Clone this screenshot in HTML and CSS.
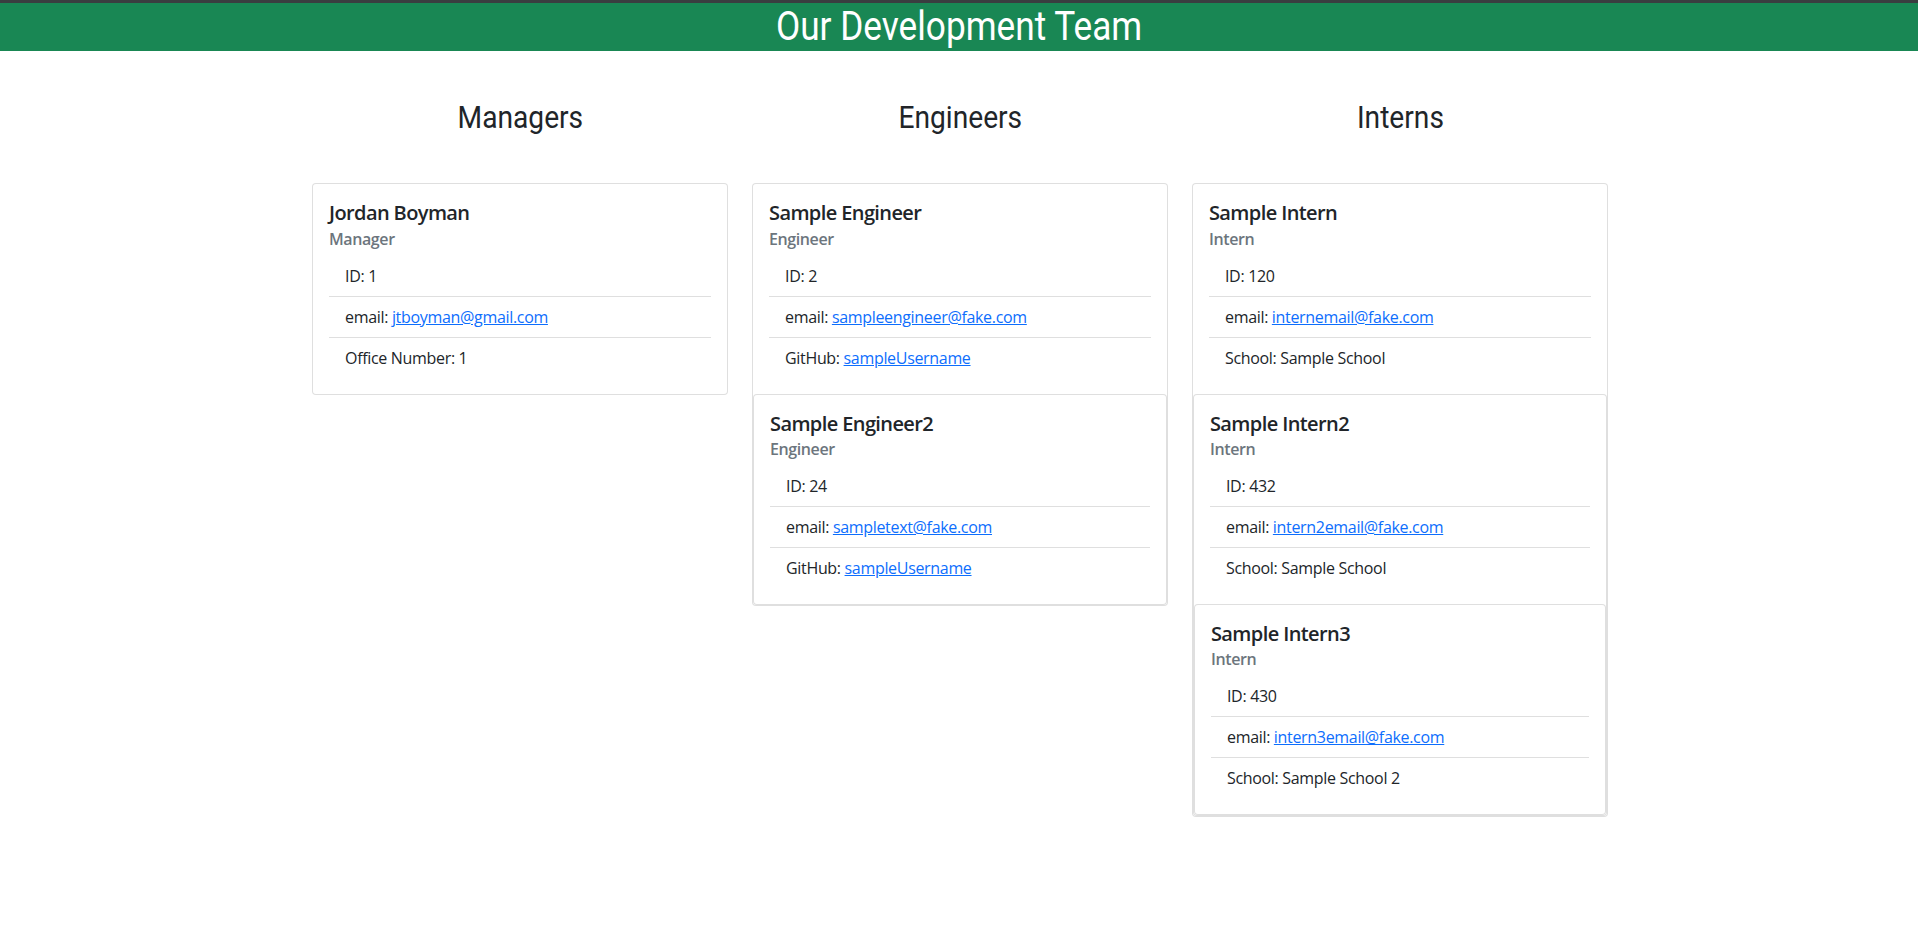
FILE: index.html
```html
<!DOCTYPE html>
<html lang="en">
<head>
<meta charset="utf-8">
<title>Our Development Team</title>
<link rel="stylesheet" href="styles.css">
</head>
<body>
<header class="site-header">
  <h1 class="site-title"><span class="condensed">Our Development Team</span></h1>
</header>
<main class="container">
  <div class="row">
    <section class="col">
      <h2 class="col-title"><span class="condensed">Managers</span></h2>
      <div class="card">
        <div class="card-body">
          <h5 class="card-title">Jordan Boyman</h5>
          <h6 class="card-subtitle">Manager</h6>
          <ul class="list-group">
            <li class="list-item">ID: 1</li>
            <li class="list-item">email: <a href="#">jtboyman@gmail.com</a></li>
            <li class="list-item">Office Number: 1</li>
          </ul>
        </div>
      </div>
    </section>
    <section class="col">
      <h2 class="col-title"><span class="condensed">Engineers</span></h2>
      <div class="card">
        <div class="card-body">
          <h5 class="card-title">Sample Engineer</h5>
          <h6 class="card-subtitle">Engineer</h6>
          <ul class="list-group">
            <li class="list-item">ID: 2</li>
            <li class="list-item">email: <a href="#">sampleengineer@fake.com</a></li>
            <li class="list-item">GitHub: <a href="#">sampleUsername</a></li>
          </ul>
        </div>
        <div class="card">
          <div class="card-body">
            <h5 class="card-title">Sample Engineer2</h5>
            <h6 class="card-subtitle">Engineer</h6>
            <ul class="list-group">
              <li class="list-item">ID: 24</li>
              <li class="list-item">email: <a href="#">sampletext@fake.com</a></li>
              <li class="list-item">GitHub: <a href="#">sampleUsername</a></li>
            </ul>
          </div>
        </div>
      </div>
    </section>
    <section class="col">
      <h2 class="col-title"><span class="condensed">Interns</span></h2>
      <div class="card">
        <div class="card-body">
          <h5 class="card-title">Sample Intern</h5>
          <h6 class="card-subtitle">Intern</h6>
          <ul class="list-group">
            <li class="list-item">ID: 120</li>
            <li class="list-item">email: <a href="#">internemail@fake.com</a></li>
            <li class="list-item">School: Sample School</li>
          </ul>
        </div>
        <div class="card">
          <div class="card-body">
            <h5 class="card-title">Sample Intern2</h5>
            <h6 class="card-subtitle">Intern</h6>
            <ul class="list-group">
              <li class="list-item">ID: 432</li>
              <li class="list-item">email: <a href="#">intern2email@fake.com</a></li>
              <li class="list-item">School: Sample School</li>
            </ul>
          </div>
          <div class="card">
            <div class="card-body">
              <h5 class="card-title">Sample Intern3</h5>
              <h6 class="card-subtitle">Intern</h6>
              <ul class="list-group">
                <li class="list-item">ID: 430</li>
                <li class="list-item">email: <a href="#">intern3email@fake.com</a></li>
                <li class="list-item">School: Sample School 2</li>
              </ul>
            </div>
          </div>
        </div>
      </div>
    </section>
  </div>
</main>
</body>
</html>
```

FILE: styles.css
```css
* {
  box-sizing: border-box;
}

body {
  margin: 0;
  font-family: "Open Sans", "Noto Sans", "Liberation Sans", sans-serif;
  font-size: 16px;
  line-height: 1.5;
  letter-spacing: -0.32px;
  color: #212529;
  background: #fff;
}

.site-header {
  border-top: 3px solid #3a3d40;
  background: #198754;
  text-align: center;
}

.site-title {
  margin: 0;
  font-family: Roboto, "Liberation Sans", sans-serif;
  font-weight: 400;
  font-size: 40px;
  line-height: 48px;
  letter-spacing: 0;
  color: #fff;
}

.condensed {
  display: inline-block;
  transform: scaleX(0.88);
}

.container {
  max-width: 1320px;
  margin: 0 auto;
  padding: 0 11px 0 13px;
}

.row {
  display: flex;
  margin: 0 -12px;
}

.col {
  flex: 0 0 33.3333%;
  padding: 0 12px;
}

.col-title {
  margin: 47px 0;
  text-align: center;
  font-family: Roboto, "Liberation Sans", sans-serif;
  font-weight: 400;
  font-size: 32px;
  line-height: 1.2;
  letter-spacing: 0;
  color: #212529;
}

.card {
  display: flex;
  flex-direction: column;
  background: #fff;
  border: 1px solid rgba(0, 0, 0, 0.125);
  border-radius: 4px;
}

.card-body {
  padding: 16px;
}

.card-title {
  margin: 0 0 8px;
  padding-top: 1px;
  height: 24px;
  font-size: 20px;
  font-weight: 600;
  line-height: 1.2;
  letter-spacing: -0.6px;
}

.card-subtitle {
  margin: -4px 0 8px;
  padding-top: 1.5px;
  height: 19.2px;
  font-size: 16px;
  font-weight: 600;
  line-height: 1.2;
  letter-spacing: -0.4px;
  color: #6c757d;
}

.list-group {
  list-style: none;
  margin: 0;
  padding: 0;
}

.list-item {
  padding: 8px 16px;
  border-bottom: 1px solid rgba(0, 0, 0, 0.125);
}

.list-item:last-child {
  border-bottom: 0;
}

.list-item a {
  color: #0d6efd;
  text-decoration: underline;
}
```
